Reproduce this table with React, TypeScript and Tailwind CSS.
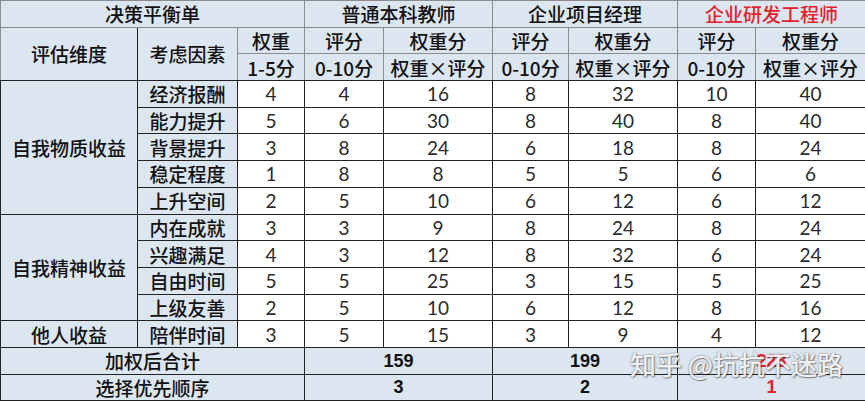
import React from "react"

type Row = [string, number, number, number, number, number, number, number]

const groups: { name: string; rows: Row[] }[] = [
  {
    name: "自我物质收益",
    rows: [
      ["经济报酬", 4, 4, 16, 8, 32, 10, 40],
      ["能力提升", 5, 6, 30, 8, 40, 8, 40],
      ["背景提升", 3, 8, 24, 6, 18, 8, 24],
      ["稳定程度", 1, 8, 8, 5, 5, 6, 6],
      ["上升空间", 2, 5, 10, 6, 12, 6, 12],
    ],
  },
  {
    name: "自我精神收益",
    rows: [
      ["内在成就", 3, 3, 9, 8, 24, 8, 24],
      ["兴趣满足", 4, 3, 12, 8, 32, 6, 24],
      ["自由时间", 5, 5, 25, 3, 15, 5, 25],
      ["上级友善", 2, 5, 10, 6, 12, 8, 16],
    ],
  },
  {
    name: "他人收益",
    rows: [["陪伴时间", 3, 5, 15, 3, 9, 4, 12]],
  },
]

const widths = [137, 100, 67, 79, 109, 76, 109, 78, 110]

// header cells: light blue, grey rules
const hd = "bg-[#dce6f1] border border-[#8c8c8c] text-center font-medium text-[#111] p-0 whitespace-nowrap overflow-hidden"
// data cells: white, dark rules
const td = "bg-white border border-[#222] text-center text-[19px] text-[#2a2a2a] p-0 font-['Lato','Liberation_Sans',sans-serif]"
const side = "bg-[#dce6f1] border border-[#222] text-center font-medium text-[#111] p-0 whitespace-nowrap overflow-hidden"
const total = "bg-[#dce6f1] border border-[#222] text-center p-0 font-['Liberation_Sans',sans-serif] font-bold text-[18px]"

export default function App() {
  return (
    <div className="relative w-[865px] h-[401px] bg-white font-['Noto_Sans_CJK_SC','Noto_Sans',sans-serif] text-[19px] leading-none overflow-hidden">
      <table className="table-fixed border-collapse w-[865px] h-[401px]">
        <colgroup>
          {widths.map((w, i) => (
            <col key={i} style={{ width: w }} />
          ))}
        </colgroup>
        <tbody>
          <tr className="h-[26.7px]">
            <td colSpan={3} className={hd}>决策平衡单</td>
            <td colSpan={2} className={hd}>普通本科教师</td>
            <td colSpan={2} className={hd}>企业项目经理</td>
            <td colSpan={2} className={`${hd} text-[#e3212b]`}>企业研发工程师</td>
          </tr>
          <tr className="h-[26.7px]">
            <td rowSpan={2} className={`${hd} border-r-[#222] border-b-[#222]`}>评估维度</td>
            <td rowSpan={2} className={`${hd} border-b-[#222]`}>考虑因素</td>
            <td className={hd}>权重</td>
            <td className={hd}>评分</td>
            <td className={hd}>权重分</td>
            <td className={hd}>评分</td>
            <td className={hd}>权重分</td>
            <td className={hd}>评分</td>
            <td className={hd}>权重分</td>
          </tr>
          <tr className="h-[26.7px]">
            {["1-5分", "0-10分", "权重×评分", "0-10分", "权重×评分", "0-10分", "权重×评分"].map((t, i) => (
              <td key={i} className={`${hd} border-b-[#222]`}>
                {t}
              </td>
            ))}
          </tr>
          {groups.map((g) =>
            g.rows.map((r, i) => (
              <tr key={r[0]} className="h-[26.7px]">
                {i === 0 && (
                  <td rowSpan={g.rows.length} className={side}>
                    {g.name}
                  </td>
                )}
                <td className={side}>{r[0]}</td>
                {r.slice(1).map((v, j) => (
                  <td key={j} className={td}>
                    {v}
                  </td>
                ))}
              </tr>
            ))
          )}
          <tr className="h-[26.7px]">
            <td colSpan={3} className={side}>加权后合计</td>
            <td colSpan={2} className={`${total} text-[#111]`}>159</td>
            <td colSpan={2} className={`${total} text-[#111]`}>199</td>
            <td colSpan={2} className={`${total} text-[#e3212b]`}>223</td>
          </tr>
          <tr className="h-[26.7px]">
            <td colSpan={3} className={side}>选择优先顺序</td>
            <td colSpan={2} className={`${total} text-[#111]`}>3</td>
            <td colSpan={2} className={`${total} text-[#111]`}>2</td>
            <td colSpan={2} className={`${total} text-[#e3212b]`}>1</td>
          </tr>
        </tbody>
      </table>
      {/* watermark */}
      <div className="absolute left-[630px] top-[351px] text-[26px] font-medium text-white/90 whitespace-nowrap [text-shadow:0_0_2px_rgba(0,0,0,0.55),1px_1px_1px_rgba(0,0,0,0.35)]">
        知乎 @抗抗不迷路
      </div>
    </div>
  )
}
